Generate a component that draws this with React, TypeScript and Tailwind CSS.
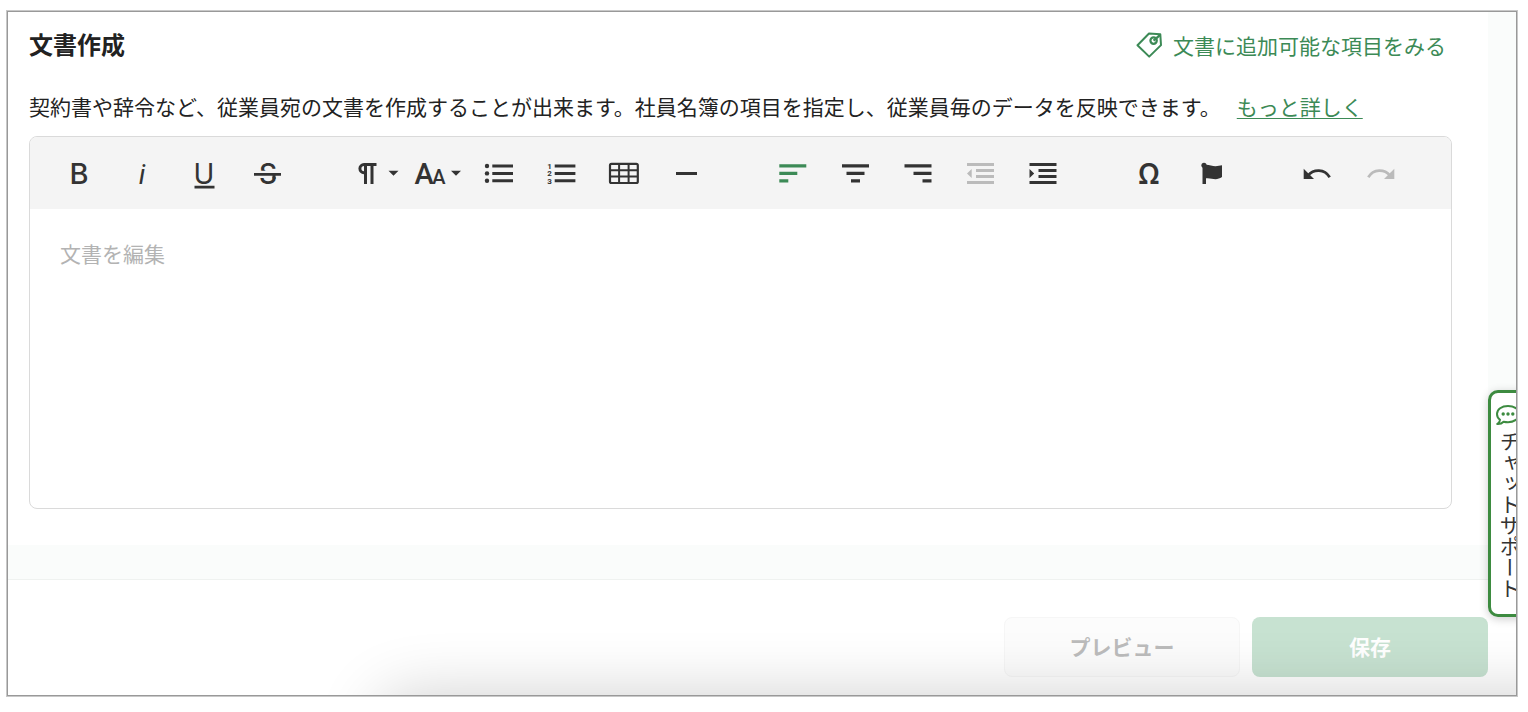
import { useState, type ReactNode } from "react";

type Tool = {
  id: string;
  label: string;
  icon: ReactNode;
  tone?: "active" | "disabled";
};

type GlyphProps = {
  x: number;
  size?: number;
  weight?: number;
  family?: string;
  children: string;
};

function Caret({ x }: { x: number }) {
  return <path d={`M${x} 15.8h10l-5 5z`} />;
}

function Glyph({ x, size = 29, weight = 500, family = "Inter", children }: GlyphProps) {
  return (
    <text x={x} y={29} fontSize={size} fontWeight={weight} fontFamily={`${family}, sans-serif`} textAnchor="middle">
      {children}
    </text>
  );
}

const toolGroups: Tool[][] = [
  [
    { id: "bold", label: "太字", icon: <Glyph x={32}>B</Glyph> },
    {
      id: "italic",
      label: "斜体",
      icon: (
        <g fontStyle="italic">
          <Glyph x={32} size={28} weight={400} family="Roboto">
            i
          </Glyph>
        </g>
      ),
    },
    {
      id: "underline",
      label: "下線",
      icon: (
        <>
          <Glyph x={31} size={28} weight={400}>
            U
          </Glyph>
          <path d="M21.5 30.8h20v2.8h-20z" />
        </>
      ),
    },
    {
      id: "strike",
      label: "取り消し線",
      icon: (
        <>
          <Glyph x={32} size={28}>
            S
          </Glyph>
          <path d="M18 15.8h27v6H18z" fill="#f4f4f4" />
          <path d="M36.5 20h3v4h-3z" />
          <path d="M18 18h27v2.7H18z" />
        </>
      ),
    },
  ],
  [
    {
      id: "paragraph",
      label: "段落の書式",
      icon: (
        <>
          <path d="M23 8h12.5v3H23a2.600 2.600 0 0 0 0 5.200h1v3h-1A5.600 5.600 0 0 1 23 8z" />
          <path d="M23 9.500h3V29h-3zM29.500 9.500h3V29h-3z" />
          <Caret x={47.5} />
        </>
      ),
    },
    {
      id: "size",
      label: "文字サイズ",
      icon: (
        <>
          <Glyph x={20} family="Roboto">
            A
          </Glyph>
          <Glyph x={35} size={20} family="Roboto">
            A
          </Glyph>
          <Caret x={47} />
        </>
      ),
    },
    {
      id: "bullets",
      label: "箇条書き",
      icon: (
        <>
          <circle cx="20" cy="11" r="2.2" />
          <circle cx="20" cy="18.4" r="2.2" />
          <circle cx="20" cy="25.8" r="2.2" />
          <path d="M25.300 9.500h20.700v3H25.300zM25.300 16.900h20.700v3H25.300zM25.300 24.300h20.700v3H25.300z" />
        </>
      ),
    },
    {
      id: "numbers",
      label: "番号付きリスト",
      icon: (
        <>
          <g fontSize="8" fontWeight="700" fontFamily="Roboto, sans-serif" textAnchor="middle">
            <text x="19.5" y="13.5">1</text>
            <text x="19.5" y="21">2</text>
            <text x="19.5" y="29">3</text>
          </g>
          <path d="M24.700 9.500h20.700v3H24.700zM24.700 16.900h20.700v3H24.700zM24.700 24.300h20.700v3H24.700z" />
        </>
      ),
    },
    {
      id: "table",
      label: "表",
      icon: (
        <g fill="none" stroke="currentColor">
          <rect x="17" y="8.800" width="27.800" height="19.200" rx="1.500" strokeWidth="2.200" />
          <path d="M26.100 9v19M35.600 9v19M17 15.200h28M17 21.600h28" strokeWidth="2" />
        </g>
      ),
    },
    { id: "rule", label: "水平線", icon: <path d="M20 17.100h21v2.800H20z" /> },
  ],
  [
    {
      id: "left",
      label: "左揃え",
      tone: "active",
      icon: <path d="M18.300 9.300h27v3.200h-27zM18.300 16.800h18v3.200h-18zM18.300 24.200h9v3.200h-9z" />,
    },
    {
      id: "center",
      label: "中央揃え",
      icon: <path d="M18 9.300h27v3.200H18zM22.500 16.800h18v3.200h-18zM27 24.200h9v3.200h-9z" />,
    },
    {
      id: "right",
      label: "右揃え",
      icon: <path d="M17.500 9.300h27v3.200h-27zM26.500 16.800h18v3.200h-18zM35.500 24.200h9v3.200h-9z" />,
    },
    {
      id: "outdent",
      label: "インデントを減らす",
      tone: "disabled",
      icon: <path d="M17 8h27v3H17zM26 14h18v3H26zM26 20h18v3H26zM17 26h27v3H17zM21.700 14v9L17 18.500z" />,
    },
    {
      id: "indent",
      label: "インデントを増やす",
      icon: <path d="M16.500 8h27v3h-27zM25.500 14h18v3h-18zM25.500 20h18v3h-18zM16.500 26h27v3h-27zM16.500 14v9l4.700-4.500z" />,
    },
  ],
  [
    {
      id: "symbol",
      label: "特殊文字",
      icon: (
        <Glyph x={31} size={28} weight={600} family="Noto Sans">
          Ω
        </Glyph>
      ),
    },
    {
      id: "tag",
      label: "項目の挿入",
      icon: (
        <>
          <circle cx="23" cy="10.300" r="2.600" />
          <path d="M21.500 10h3.500v19h-3.500z" />
          <path d="M24 9.700c4-.4 7 1.500 10.500 1.500 2.500 0 4.500-.8 6.500-1V22c-2.200 1.400-4.200 2.200-6.500 2.200-3.200 0-6-1.600-10.500-.8z" />
        </>
      ),
    },
  ],
  [
    {
      id: "undo",
      label: "元に戻す",
      icon: (
        <>
          <path d="M17.700 13.700V24H28z" />
          <path d="M22 20.500c5.500-6.500 16.500-7 21.700 1.800" fill="none" stroke="currentColor" strokeWidth="2.700" />
        </>
      ),
    },
    {
      id: "redo",
      label: "やり直す",
      tone: "disabled",
      icon: (
        <>
          <path d="M45.300 13.700V24H35z" />
          <path d="M41 20.500c-5.500-6.500-16.500-7-21.700 1.800" fill="none" stroke="currentColor" strokeWidth="2.700" />
        </>
      ),
    },
  ],
];

function ToolButton({ tool }: { tool: Tool }) {
  const color = tool.tone === "active" ? "text-[#3c8a56]" : tool.tone === "disabled" ? "text-[#bbbbbb]" : "text-[#333333]";
  return (
    <button
      type="button"
      aria-label={tool.label}
      disabled={tool.tone === "disabled"}
      className={`flex h-[72px] w-[63px] items-center justify-center ${color}`}
    >
      <svg viewBox="0 0 63 36" className="h-9 w-[63px] overflow-visible" fill="currentColor" aria-hidden="true">
        {tool.icon}
      </svg>
    </button>
  );
}

function TagIcon() {
  return (
    <svg viewBox="0 0 26 26" className="size-[26px]" fill="none" stroke="currentColor" strokeWidth="2" aria-hidden="true">
      <path d="M1.500 13.200 13 1.500l11.300.8.700 10.800L13.200 24.600z" strokeLinejoin="round" />
      <circle cx="17.600" cy="8.600" r="3.200" strokeWidth="2.200" />
      <path d="m17.600 8.600 6.600-5.800" strokeWidth="2.400" />
    </svg>
  );
}

function ChatIcon() {
  return (
    <svg viewBox="0 0 26 22" className="h-[22px] w-[26px] shrink-0" aria-hidden="true">
      <path
        d="M13 2C6.600 2 2 5.300 2 10c0 2.400 1.100 4.400 3 5.800-.2 1.600-1 3-2.800 4.200 2.600.2 4.900-.7 6.400-2.300 1.400.3 2.800.5 4.400.5 6.400 0 11-3.500 11-8.200S19.400 2 13 2z"
        fill="none"
        stroke="currentColor"
        strokeWidth="2"
        strokeLinejoin="round"
      />
      <g fill="currentColor">
        <circle cx="8.200" cy="10" r="1.700" />
        <circle cx="13" cy="10" r="1.700" />
        <circle cx="17.800" cy="10" r="1.700" />
      </g>
    </svg>
  );
}

export default function App() {
  const [body, setBody] = useState("");

  return (
    <div className="bg-white pt-[11px] pr-[11px] pb-4 pl-[7px] font-['Noto_Sans_CJK_JP',sans-serif] text-[21px] text-[#222222]">
      <div className="relative overflow-hidden border border-[#999999] bg-[#fafcfb] outline outline-[#c8c8c8]">
        <main className="mr-7 bg-white pt-[14px] pr-9 pb-9 pl-[21px]">
          <div className="mr-[6px] flex items-center justify-between">
            <h1 className="text-2xl leading-9 font-bold">文書作成</h1>
            <a href="#fields" className="flex items-center gap-[11px] pt-[2px] leading-[34px] text-[#3c8a56]">
              <TagIcon />
              文書に追加可能な項目をみる
            </a>
          </div>
          <p className="mt-[29px] flex items-center gap-4 leading-[30px] whitespace-nowrap">
            契約書や辞令など、従業員宛の文書を作成することが出来ます。社員名簿の項目を指定し、従業員毎のデータを反映できます。
            <a href="#help" className="text-[#3c8a56] underline decoration-1 underline-offset-3">
              もっと詳しく
            </a>
          </p>

          <div className="mt-[15px] overflow-hidden rounded-lg border border-[#dadada]">
            <div role="toolbar" aria-label="書式" className="flex gap-[42px] bg-[#f4f4f4] pl-[17px]">
              {toolGroups.map((group) => (
                <div key={group[0].id} className="flex">
                  {group.map((tool) => (
                    <ToolButton key={tool.id} tool={tool} />
                  ))}
                </div>
              ))}
            </div>
            <textarea
              aria-label="文書を編集"
              placeholder="文書を編集"
              value={body}
              onChange={(event) => setBody(event.target.value)}
              className="block h-[299px] w-full resize-none px-[30px] pt-[29px] leading-[30px] outline-none placeholder:text-[#b3b3b3]"
            />
          </div>
        </main>

        <footer className="relative mt-[34px] flex justify-end gap-3 overflow-hidden border-t border-[#eff2f0] bg-white pt-[37px] pr-7 pb-[18px] font-bold">
          <button type="button" disabled className="h-[60px] w-[236px] rounded-lg border border-[#f6f6f6] bg-[#fcfcfc] text-[#bcbcbc]">
            プレビュー
          </button>
          <button type="button" disabled className="h-[60px] w-[236px] rounded-lg bg-[#c7e2d1] text-white">
            保存
          </button>
          <div className="pointer-events-none absolute top-full -right-24 left-[370px] h-40 rounded-[32px] shadow-[0_0_64px_rgba(0,0,0,0.19)]" />
        </footer>

        <button
          type="button"
          aria-label="チャットサポート"
          className="absolute top-[378px] -right-4 flex h-[227px] w-11 flex-col items-start rounded-[10px] border-[3px] border-[#3d8b40] bg-white pt-[11px] pl-1 text-[#3d8b40] shadow-[0_2px_10px_rgba(0,0,0,0.2)]"
        >
          <ChatIcon />
          <span className="mt-[5px] ml-[3px] leading-6 text-[#333333] [writing-mode:vertical-rl]">チャットサポート</span>
        </button>
      </div>
    </div>
  );
}
